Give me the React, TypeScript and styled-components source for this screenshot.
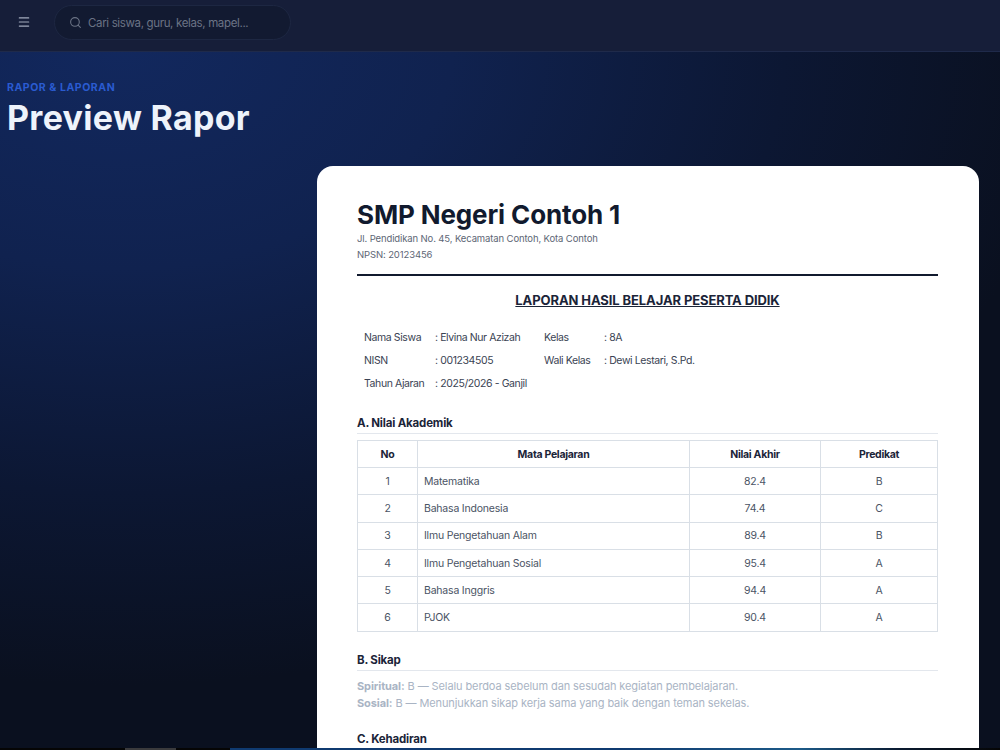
import React from 'react';
import styled, { createGlobalStyle } from 'styled-components';
import { Menu, Search } from 'lucide-react';

const GlobalStyle = createGlobalStyle`
  html, body {
    margin: 0;
    padding: 0;
    height: 100%;
    overflow: hidden;
    background: #0a101f;
  }
  * {
    box-sizing: border-box;
  }
`;

const Page = styled.div`
  width: 1000px;
  height: 750px;
  display: flex;
  flex-direction: column;
  overflow: hidden;
  font-family: Inter, "Noto Sans", sans-serif;
  background: radial-gradient(ellipse 950px 640px at 12% 6%, #12285e 0%, #10224f 35%, #0c1733 70%, #0a101f 100%);
`;

const Topbar = styled.header`
  flex: none;
  height: 52px;
  display: flex;
  align-items: flex-start;
  gap: 23px;
  padding: 5px 17px 0;
  background: #161e39;
  border-bottom: 1px solid #1f2a4a;
`;

const MenuButton = styled.button`
  display: flex;
  margin-top: 10px;
  padding: 0;
  border: 0;
  background: none;
  color: #a3abbd;
`;

const SearchBox = styled.div`
  width: 237px;
  height: 35px;
  display: flex;
  align-items: center;
  gap: 6px;
  padding: 0 14px;
  border-radius: 18px;
  background: #121a31;
  border: 1px solid #1d2742;
  color: #6b7385;
  font-size: 11.5px;
  letter-spacing: -0.35px;
`;

const Main = styled.main`
  flex: 1;
  min-height: 0;
  padding: 29px 21px 0 7px;
  overflow: hidden;
`;

const Eyebrow = styled.div`
  color: #2a5bd0;
  font-size: 10.5px;
  line-height: 13px;
  font-weight: 700;
  letter-spacing: 0.55px;
`;

const Title = styled.h1`
  margin: 3px 0 0;
  color: #eef3fb;
  font-size: 34px;
  line-height: 42px;
  font-weight: 700;
  letter-spacing: 0.3px;
`;

const Sheet = styled.section`
  width: 662px;
  margin: 27px 0 0 auto;
  padding: 33px 41px 0 40px;
  background: #fff;
  border-radius: 16px 16px 0 0;
  color: #111a2e;
`;

const SchoolName = styled.h2`
  margin: 0;
  font-size: 26px;
  line-height: 32px;
  font-weight: 700;
  letter-spacing: -0.13px;
  color: #111a2e;
`;

const SchoolMeta = styled.p`
  margin: 0;
  font-size: 9.5px;
  line-height: 15.5px;
  color: #5d6675;
  letter-spacing: -0.12px;
`;

const Divider = styled.hr`
  margin: 12px 0 0;
  border: 0;
  border-top: 2px solid #111a2e;
`;

const ReportTitle = styled.h3`
  margin: 16px 0 0;
  text-align: center;
  font-size: 13px;
  line-height: 17px;
  font-weight: 700;
  text-decoration: underline;
  color: #1b2438;
  letter-spacing: -0.1px;
`;

const InfoGrid = styled.div`
  display: grid;
  grid-template-columns: 71px 109px 60px auto;
  grid-auto-rows: 23px;
  align-items: center;
  margin: 17px 0 0 7px;
  font-size: 10.5px;
  color: #3a4353;
  letter-spacing: -0.4px;
`;

const SectionHeading = styled.h4<{ $top: number }>`
  margin: ${({ $top }) => $top}px 0 0;
  padding-bottom: 2px;
  border-bottom: 1px solid #e3e7ed;
  font-size: 11.5px;
  line-height: 15px;
  font-weight: 700;
  color: #1b2438;
  letter-spacing: -0.18px;
`;

const Table = styled.table`
  width: 100%;
  margin-top: 6px;
  border-collapse: collapse;
  table-layout: fixed;
  font-size: 10.5px;
  color: #4a5364;
`;

const Head = styled.th`
  height: 27px;
  padding: 0;
  border: 1px solid #d9dfe6;
  font-weight: 700;
  color: #1b2438;
  letter-spacing: -0.3px;
`;

const Cell = styled.td<{ $left?: boolean }>`
  height: 27.3px;
  padding: 0 ${({ $left }) => ($left ? '6px' : '0')};
  border: 1px solid #d9dfe6;
  text-align: ${({ $left }) => ($left ? 'left' : 'center')};
  letter-spacing: -0.2px;
`;

const Remark = styled.p`
  margin: 0;
  font-size: 11px;
  line-height: 17.5px;
  color: #a9b4c4;
  letter-spacing: -0.1px;

  strong {
    font-weight: 700;
  }
`;

const Remarks = styled.div`
  margin-top: 7px;
`;

const TaskStrip = styled.div`
  flex: none;
  height: 2px;
  background: linear-gradient(90deg, #050505 0 125px, #3a3a3c 125px 176px, #050505 176px 230px, #0f3a70 230px 620px, #1c5a88 800px, #0a1a30 900px, #050505 1000px);
`;

const subjects = [
  ['Matematika', '82.4', 'B'],
  ['Bahasa Indonesia', '74.4', 'C'],
  ['Ilmu Pengetahuan Alam', '89.4', 'B'],
  ['Ilmu Pengetahuan Sosial', '95.4', 'A'],
  ['Bahasa Inggris', '94.4', 'A'],
  ['PJOK', '90.4', 'A'],
];

export default function App() {
  return (
    <Page>
      <GlobalStyle />
      <Topbar>
        <MenuButton aria-label="Menu">
          <Menu size={14} />
        </MenuButton>
        <SearchBox>
          <Search size={13} />
          <span>Cari siswa, guru, kelas, mapel...</span>
        </SearchBox>
      </Topbar>
      <Main>
        <Eyebrow>RAPOR &amp; LAPORAN</Eyebrow>
        <Title>Preview Rapor</Title>
        <Sheet>
          <SchoolName>SMP Negeri Contoh 1</SchoolName>
          <SchoolMeta>Jl. Pendidikan No. 45, Kecamatan Contoh, Kota Contoh</SchoolMeta>
          <SchoolMeta>NPSN: 20123456</SchoolMeta>
          <Divider />
          <ReportTitle>LAPORAN HASIL BELAJAR PESERTA DIDIK</ReportTitle>
          <InfoGrid>
            <span>Nama Siswa</span>
            <span>: Elvina Nur Azizah</span>
            <span>Kelas</span>
            <span>: 8A</span>
            <span>NISN</span>
            <span>: 001234505</span>
            <span>Wali Kelas</span>
            <span>: Dewi Lestari, S.Pd.</span>
            <span>Tahun Ajaran</span>
            <span>: 2025/2026 - Ganjil</span>
          </InfoGrid>
          <SectionHeading $top={21}>A. Nilai Akademik</SectionHeading>
          <Table>
            <colgroup>
              <col width="60" />
              <col width="272" />
              <col width="131" />
              <col width="117" />
            </colgroup>
            <thead>
              <tr>
                <Head>No</Head>
                <Head>Mata Pelajaran</Head>
                <Head>Nilai Akhir</Head>
                <Head>Predikat</Head>
              </tr>
            </thead>
            <tbody>
              {subjects.map(([name, score, grade], i) => (
                <tr key={name}>
                  <Cell>{i + 1}</Cell>
                  <Cell $left>{name}</Cell>
                  <Cell>{score}</Cell>
                  <Cell>{grade}</Cell>
                </tr>
              ))}
            </tbody>
          </Table>
          <SectionHeading $top={21}>B. Sikap</SectionHeading>
          <Remarks>
            <Remark><strong>Spiritual:</strong> B — Selalu berdoa sebelum dan sesudah kegiatan pembelajaran.</Remark>
            <Remark><strong>Sosial:</strong> B — Menunjukkan sikap kerja sama yang baik dengan teman sekelas.</Remark>
          </Remarks>
          <SectionHeading $top={19}>C. Kehadiran</SectionHeading>
        </Sheet>
      </Main>
      <TaskStrip />
    </Page>
  );
}
